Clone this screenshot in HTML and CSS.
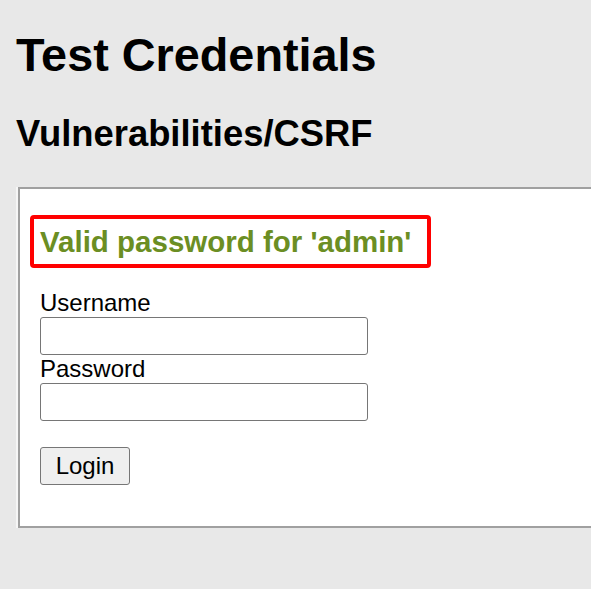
FILE: index.html
```html
<!DOCTYPE html>
<html>
<head>
<meta charset="utf-8">
<title>Test Credentials</title>
<link rel="stylesheet" href="styles.css">
</head>
<body>
<h1 class="title">Test Credentials</h1>
<h2 class="subtitle">Vulnerabilities/CSRF</h2>
<div class="code-area">
  <div class="message">Valid password for 'admin'</div>
  <form class="login-form">
    <label class="field-label" for="user">Username</label>
    <input class="field-input" id="user" type="text">
    <label class="field-label" for="pass">Password</label>
    <input class="field-input" id="pass" type="password">
    <button class="login-btn" type="button">Login</button>
  </form>
</div>
</body>
</html>
```

FILE: styles.css
```css
html, body {
  margin: 0;
  padding: 0;
}
body {
  background: #e8e8e8;
  font-family: "Liberation Sans", Arial, sans-serif;
  color: #000;
  padding-left: 16px;
}
.title {
  font-size: 46.8px;
  line-height: 54px;
  font-weight: bold;
  margin: 28px 0 0 0;
}
.subtitle {
  font-size: 36.4px;
  line-height: 42px;
  font-weight: bold;
  margin: 31px 0 0 0;
}
.code-area {
  margin-top: 32px;
  margin-left: 2px;
  background: #fff;
  border: 2px solid #a0a0a0;
  border-right: 0;
  box-shadow: -2px 0 0 #f6f6f6;
  padding: 26px 10px 41px 10px;
}
.message {
  width: 381px;
  border: 4px solid #ff0000;
  border-radius: 4px;
  color: #6b8e23;
  font-weight: bold;
  font-size: 29.5px;
  line-height: 45px;
  padding: 0 6px;
}
.login-form {
  display: flex;
  flex-direction: column;
  align-items: flex-start;
  margin-top: 21px;
  padding-left: 10px;
}
.field-label {
  font-size: 24px;
  line-height: 28px;
}
.field-input {
  box-sizing: border-box;
  width: 328px;
  height: 38px;
  margin: 0;
  border: 1px solid #767676;
  border-radius: 3px;
  background: #fff;
  font-size: 20px;
}
.login-btn {
  margin-top: 26px;
  box-sizing: border-box;
  width: 90px;
  height: 38px;
  border: 1px solid #767676;
  border-radius: 3px;
  background: #efefef;
  font-family: "Liberation Sans", Arial, sans-serif;
  font-size: 24px;
  color: #000;
  padding: 0;
}
```
